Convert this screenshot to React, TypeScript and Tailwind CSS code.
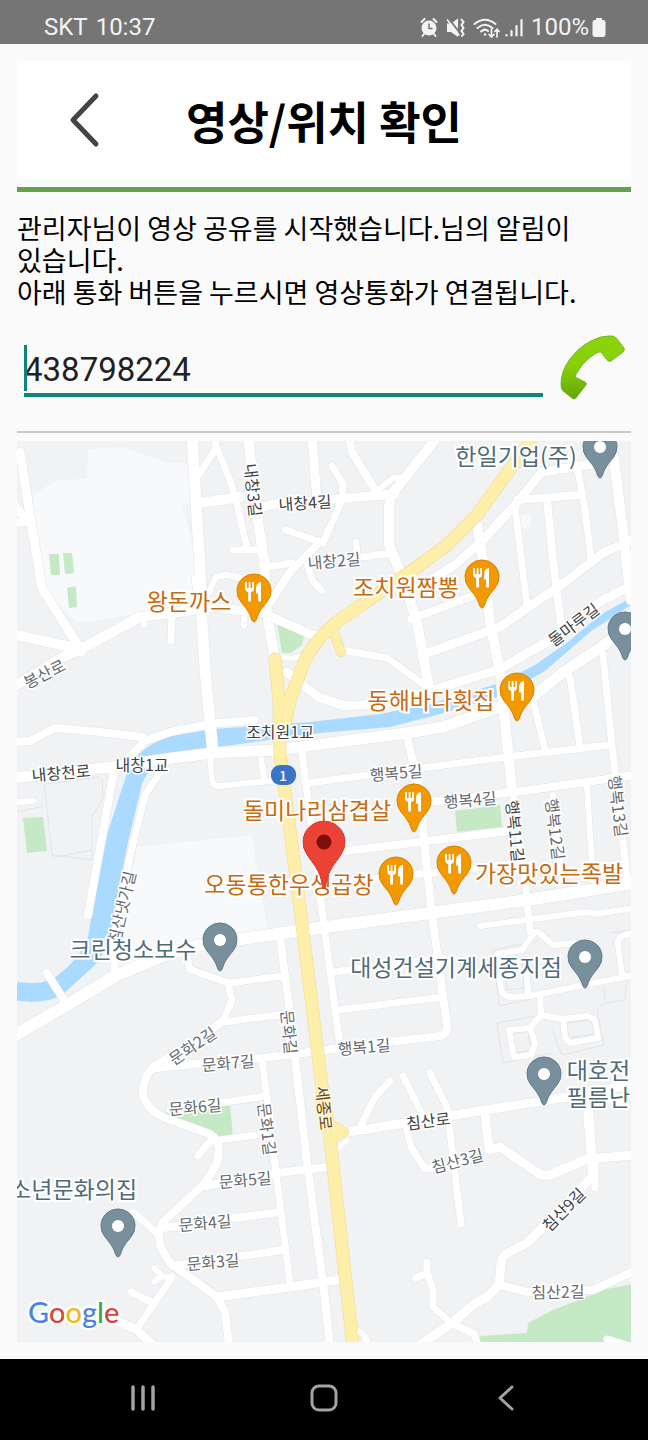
type Point = [number, number];
type Road = [width: number, d: string];
type Label = [text: string, x: number, y: number, angle: number];

const roads: Road[] = [
  [9, "M20 452 L32 528 L42 588 L82 652"],
  [8, "M14 504 L26 520 M14 523 L28 522"],
  [11, "M192 436 L200 568 L202 622 L205 670 L213 753"],
  [6, "M210 755 L212 780 Q213 786 219 786 L278 780"],
  [7, "M215 436 L216 446 L230 480 L236 500 L247 548 M216 448 L199 475"],
  [10, "M200 503 L240 497"],
  [10, "M248 436 L257 515 L264 560 L268 620 L275 660"],
  [7, "M233 550 L258 550"],
  [9, "M261 507 L280 503 L337 499 L395 494"],
  [9, "M312 436 L317 500"],
  [10, "M438 436 L392 494 Q389 500 389 510 L389 545 L403 578 L417 622 L429 688"],
  [8, "M349 436 L352 452 L375 490"],
  [7, "M332 466 L343 484 L342 500 L323 543 L286 530"],
  [8, "M318 544 L290 572 L268 606"],
  [7, "M267 567 L292 563 M307 562 L312 580 L322 591"],
  [6, "M378 490 L393 478 L402 477"],
  [7, "M363 557 L392 553 M356 542 L357 557"],
  [10, "M12 634 L80 649"],
  [10, "M10 689 L63 657 L83 648 L140 617 L193 610"],
  [9, "M200 606 L263 613 L310 634 L325 638"],
  [7, "M172 616 L171 641 M144 618 L144 624 M195 579 L198 600"],
  [6, "M208 594 L216 577 L226 575 L245 579 M245 612 L244 625"],
  [9, "M600 463 L542 472 L515 505 L483 540 L455 565 L408 594"],
  [10, "M477 525 L483 560 L490 622 L500 672 L512 790"],
  [7, "M515 507 L527 606 M577 465 L585 510 L591 558"],
  [8, "M547 500 L553 560 L561 624 M517 500 L578 495"],
  [10, "M611 436 L623 530 L631 600"],
  [9, "M634 539 L603 553 L557 588 L527 608 L500 627 L422 655"],
  [9, "M634 584 L600 602 L550 640 L500 669 L430 691 L380 704 L345 706 L318 697 L287 672"],
  [8, "M411 619 L478 594"],
  [7, "M341 650 L387 658 L427 687"],
  [8, "M12 742 L30 741 L55 728 L100 732 L142 737"],
  [8, "M254 720 L210 724 L170 732 L145 741 L128 758"],
  [11, "M12 778 L113 767 L173 758 L213 753 L277 750 L330 743 L407 733 L443 727 L497 708 L536 694 L565 671 L600 648 L634 622"],
  [8, "M114 770 L88 915"],
  [7, "M163 768 L145 795 L130 857 L120 905 L113 940 L115 975"],
  [8, "M47 973 L67 1005"],
  [12, "M10 1038 L67 1005 L117 975 L165 955 L200 945 L297 931 L430 913 L527 900 L634 883"],
  [6, "M480 926 L587 912 L597 914 L634 908"],
  [6, "M12 803 L33 801 M261 759 L264 778"],
  [7, "M302 753 L322 910 L340 1046"],
  [7, "M308 783 L437 766 L507 757 L610 745"],
  [8, "M400 806 L430 802 L530 790 L634 775"],
  [8, "M345 851 L420 842 L515 830"],
  [8, "M407 737 L420 790 L425 850 L432 915 L447 1026 Q448 1034 440 1036 L380 1043 L325 1050 L263 1058 L203 1063 L157 1068"],
  [7, "M533 700 L545 750 M570 677 L580 747 M603 655 L612 745 L627 878"],
  [7, "M512 790 L518 830 L526 890 L530 932"],
  [6, "M587 787 L593 880 M553 795 L562 880"],
  [7, "M340 882 L440 872 L520 863"],
  [7, "M333 972 L443 958 M338 1010 L443 997"],
  [6, "M535 932 L522 950 L497 954 L501 988 Q502 997 512 997 L530 996 L560 990 L634 975"],
  [6, "M538 932 L553 945 L590 942 M526 960 L528 992 M634 934 Q616 934 618 945 L622 975"],
  [6, "M540 995 L541 1015 L530 1028 L509 1030 L514 1057 L531 1055 L535 1043 L530 1028"],
  [6, "M541 1015 L563 1019 L588 1016 L595 1020 L598 1038 L570 1043 L565 1037 L563 1019"],
  [9, "M342 1133 L567 1097 L634 1084"],
  [7, "M390 1081 L375 1097 L361 1125 M403 1076 L423 1116"],
  [7, "M430 1073 L447 1107 L461 1224"],
  [7, "M405 1122 L411 1147 L425 1169 L437 1168"],
  [9, "M485 1115 L489 1150 L500 1147 L541 1175 L550 1175 L587 1159 L634 1155"],
  [10, "M587 1098 L593 1173 M608 1098 L625 1106"],
  [7, "M595 1160 L595 1188"],
  [9, "M591 1178 L560 1210 L527 1243 L506 1254 Q501 1258 501 1264 L499 1285 L487 1297 L473 1305 L452 1323 L420 1345"],
  [8, "M500 1285 L527 1292 L593 1290 L634 1271"],
  [7, "M478 1345 L474 1334 L450 1322 L433 1307 L433 1290 L427 1273 L427 1262 M416 1278 L427 1273"],
  [6, "M356 1330 L364 1334 L368 1345"],
  [7, "M187 953 L189 969 L228 983 L232 1000 L223 1021"],
  [8, "M223 1021 L190 1045 L153 1067 Q143 1078 143 1093 Q146 1110 165 1118 L210 1134 Q219 1140 219 1150 L217 1164 L204 1184 L162 1223 Q158 1230 160 1246 L170 1263 L217 1297 L225 1312 L229 1345"],
  [7, "M230 983 L283 976 M223 1022 L286 1014"],
  [8, "M280 937 L290 1013 L297 1075 L307 1163 L323 1283 L330 1345"],
  [7, "M262 1060 L267 1097 L273 1150 L290 1283"],
  [7, "M170 1110 L267 1096 M220 1140 L270 1133 M210 1141 L198 1156"],
  [8, "M205 1186 L277 1173 L329 1167 M163 1228 L280 1212 M173 1266 L283 1250"],
  [9, "M217 1297 L290 1287 L343 1279"],
  [7, "M133 1212 L158 1234 M172 1277 L137 1329 M131 1292 L153 1303"],
  [6, "M154 1268 L162 1276 L154 1282 M162 1276 L172 1278"],
  [9, "M108 1317 L137 1330 L155 1347"],
];

const outlines = [
  "M44 782 L52 855 L94 860 M102 779 L103 798 L92 817 L92 860 M47 784 L100 777 M17 812 L44 806 M52 858 L92 850",
  "M497 1023 L503 1063 L551 1053 M497 1023 L535 1016 M493 950 L538 941 M493 950 L499 1006 L536 998 M552 1030 L562 1055 L604 1045 L597 1010 L605 1003 L625 1000 L626 985 M610 933 L631 930 M604 988 L605 1001",
  "M512 1034 L528 1031 L531 1050 L516 1053 Z M566 1023 L591 1020 L594 1034 L569 1038 Z M505 960 L522 957 L524 988 L507 990 Z",
];

const greens = [
  "M49 554 L59 554 L60 575 L51 575 Z",
  "M63 553 L72 553 L74 573 L65 574 Z",
  "M67 588 L76 586 L77 607 L69 608 Z",
  "M277 623 L304 635 L302 645 L291 653 L282 653 Z",
  "M23 818 L43 817 L47 851 L27 853 Z",
  "M455 811 L500 805 L502 827 L457 832 Z",
  "M163 1113 L230 1105 L233 1137 L217 1137 L193 1123 Z",
  "M480 1336 L527 1333 L528 1323 L553 1310 L607 1289 L634 1284 V1345 H480 Z",
];

const highways: Road[] = [
  [12, "M534 436 L477 515 L447 545 L413 570 L380 592 L337 622 Q310 645 303 665 L290 700 L284 727"],
  [12, "M275 659 L279 700 L280 753 L299 900 L322 1087 L329 1130 L353 1346"],
  [9, "M333 630 L341 652 M330 1124 L344 1132 L332 1138"],
];

const strongLabels: Label[] = [
  ["내창3길", 254, 490, 84],
  ["내창4길", 305, 502, -4],
  ["돌마루길", 573, 624, -37],
  ["조치원1교", 280, 731, 0],
  ["내창1교", 142, 764, 0],
  ["내창천로", 61, 772, -5],
  ["행복11길", 516, 831, 84],
  ["침산로", 428, 1120, -7],
  ["침산9길", 563, 1209, -45],
];

const softLabels: Label[] = [
  ["내창2길", 334, 560, -5],
  ["봉산로", 44, 673, -27],
  ["행복5길", 396, 772, -5],
  ["행복4길", 470, 799, -5],
  ["행복12길", 556, 829, 83],
  ["행복13길", 619, 806, 83],
  ["침산냇가길", 121, 907, -77],
  ["문화길", 290, 1032, 84],
  ["문화2길", 192, 1045, -34],
  ["문화7길", 228, 1062, -5],
  ["문화6길", 195, 1106, -5],
  ["행복1길", 364, 1046, -5],
  ["문화1길", 268, 1129, 83],
  ["문화5길", 245, 1179, -5],
  ["문화4길", 205, 1222, -5],
  ["문화3길", 213, 1261, -5],
  ["침산3길", 457, 1160, -15],
  ["침산2길", 558, 1291, -1],
];

const foodLabels: Label[] = [
  ["왕돈까스", 189, 600, 0],
  ["조치원짬뽕", 406, 586, 0],
  ["동해바다횟집", 431, 699, 0],
  ["돌미나리삼겹살", 317, 809, 0],
  ["오동통한우생곱창", 289, 883, 0],
  ["가장맛있는족발", 549, 872, 0],
];

const placeLabels: Label[] = [
  ["한일기업(주)", 516, 455, 0],
  ["크린청소보수", 133, 948, 0],
  ["대성건설기계세종지점", 456, 966, 0],
  ["대호전자", 609, 1069, 0],
  ["필름난방", 609, 1096, 0],
  ["청소년문화의집", 63, 1188, 0],
];

const foodPins: Point[] = [[254, 591], [482, 577], [517, 690], [414, 801], [454, 863], [396, 874]];
const placePins: Point[] = [[600, 447], [625, 629], [220, 940], [585, 957], [544, 1074], [118, 1226]];

const pinShape = "M0 31 Q-1.500 31 -2.500 28 C-5 20 -9 16 -13 10.900 A17 17 0 1 1 13 10.900 C9 16 5 20 2.500 28 Q1.500 31 0 31 Z";

function MapLabels({ items, className }: { items: Label[]; className: string }) {
  return (
    <g className={className}>
      {items.map(([text, x, y, angle]) => (
        <text key={text} transform={`translate(${x} ${y}) rotate(${angle})`} textAnchor="middle" dominantBaseline="central">
          {text}
        </text>
      ))}
    </g>
  );
}

function FoodPin({ at: [x, y] }: { at: Point }) {
  return (
    <g transform={`translate(${x} ${y})`}>
      <path d={pinShape} fill="#f29900" stroke="#d98200" strokeWidth="1" />
      <path
        d="M-8.800 -9 V-2.500 Q-8.800 0.500 -5.800 1 V10.500 H-3 V1 Q0 0.500 0 -2.500 V-9 H-1.800 V-3 H-3.500 V-9 H-5.300 V-3 H-7 V-9 Z M7 -9 Q2 -8.500 2 -2 V2.500 H4.200 V10.500 H7 Z"
        fill="#fff"
      />
    </g>
  );
}

function StreetMap() {
  return (
    <svg
      viewBox="17 441 614 901"
      preserveAspectRatio="xMidYMid slice"
      role="img"
      aria-label="지도"
      className="block w-full flex-1 bg-[#f0f2f4] font-['Noto_Sans_CJK_KR',sans-serif]"
    >
      <g fill="#f8f9fb">
        <path d="M88 449 L123 447 L167 463 L190 463 L196 503 L182 505 L195 552 L198 605 L77 623 L42 588 L33 495 L57 480 L87 479 Z" />
        <path d="M137 847 L252 835 L257 870 L268 930 L200 945 L113 975 L125 905 Z" />
        <path d="M520 516 L530 514 L531 526 L521 528 Z" />
      </g>
      <g fill="#c5e8c5">
        {greens.map((d) => <path key={d} d={d} />)}
      </g>
      <g fill="none" stroke="#e1e3e5" strokeWidth="1">
        {outlines.map((d) => <path key={d} d={d} />)}
      </g>
      <path
        d="M634 596 L600 615 L568 642 L535 665 L500 683 L430 704 L380 714 L310 722 L283 724 L215 729 L175 735 Q150 742 137 756 L126 776 L108 832 L94 900 L88 938 Q80 958 57 976 Q45 986 17 982 L10 1000 Q45 1005 62 995 L95 965 Q108 950 113 917 L128 842 L142 784 Q152 760 175 752 L233 745 L320 733 L390 727 L440 714 L500 696 L545 671 L590 632 L634 603 Z"
        fill="#aadaff"
      />
      <g fill="none" strokeLinecap="round" strokeLinejoin="round">
        {roads.map(([width, d]) => <path key={d} d={d} stroke="#e2e4e8" strokeWidth={width + 1} />)}
        {roads.map(([width, d]) => <path key={d} d={d} stroke="#fff" strokeWidth={width} />)}
        <path d="M282 657 Q294 660 304 655 M347 1140 L335 1152" stroke="#fff" strokeWidth="4" />
        <path d="M607 1339 L630 1346" stroke="#fff" strokeWidth="7" />
        {highways.map(([width, d]) => <path key={d} d={d} stroke="#f0d98c" strokeWidth={width + 1} />)}
        {highways.map(([width, d]) => <path key={d} d={d} stroke="#fdefa9" strokeWidth={width} />)}
      </g>
      <rect x="271" y="765" width="25" height="20" rx="9" fill="#3a74c8" />
      <text x="283" y="775" textAnchor="middle" dominantBaseline="central" className="fill-white text-[14px] font-medium">1</text>

      <MapLabels items={softLabels} className="fill-[#666a70] stroke-white stroke-3 text-[16px] [paint-order:stroke]" />
      <MapLabels items={strongLabels} className="fill-[#3f4246] stroke-white stroke-3 text-[16px] [paint-order:stroke]" />
      <MapLabels items={[["세종로", 325, 1108, 84]]} className="fill-[#6b3f12] stroke-[#fff7d6] stroke-3 text-[16px] [paint-order:stroke]" />
      <MapLabels items={foodLabels} className="fill-[#c76a10] stroke-white stroke-4 text-[23px] [paint-order:stroke]" />
      <MapLabels items={placeLabels} className="fill-[#506b78] stroke-white stroke-4 text-[23px] [paint-order:stroke]" />

      {foodPins.map((at) => <FoodPin key={at.join()} at={at} />)}
      {placePins.map(([x, y]) => (
        <g key={x} transform={`translate(${x} ${y})`}>
          <path d={pinShape} fill="#78909c" stroke="#607a87" strokeWidth="1" />
          <circle r="6" fill="#fff" />
        </g>
      ))}
      <g transform="translate(324 842)">
        <path d="M0 47 Q-1.500 47 -2 42 C-4 28 -11 22 -17 12.500 A21 21 0 1 1 17 12.500 C11 22 4 28 2 42 Q1.500 47 0 47 Z" fill="#ea4335" stroke="#d33c2f" strokeWidth="1" />
        <circle r="7.500" fill="#7d0f0e" />
      </g>
      <text x="28" y="1323" className="stroke-white stroke-5 font-['Lato',sans-serif] text-[29px] font-medium [paint-order:stroke]">
        <tspan fill="#4a83e8">G</tspan>
        <tspan fill="#d6463b">o</tspan>
        <tspan fill="#f2b91d">o</tspan>
        <tspan fill="#4a83e8">g</tspan>
        <tspan fill="#3fa257">l</tspan>
        <tspan fill="#d6463b">e</tspan>
      </text>
    </svg>
  );
}

function StatusBar() {
  return (
    <div className="flex h-11 items-end justify-between bg-[#757575] pr-[41px] pb-[3px] pl-11 font-['Roboto',sans-serif] text-[24px] leading-7 text-[#f3f3f3]">
      <div className="flex gap-2">
        <span>SKT</span>
        <span>10:37</span>
      </div>
      <div className="flex items-center">
        <svg viewBox="0 0 112 28" className="h-7 w-28" fill="none" stroke="currentColor" strokeLinecap="round" aria-hidden="true">
          <circle cx="10" cy="15" r="7.500" fill="currentColor" stroke="none" />
          <path d="M2.500 9 L5.500 6 M17.500 9 L14.500 6 M5 21 L3.500 23 M15 21 L16.500 23" strokeWidth="2" />
          <path d="M10 11 V15.500 H13" stroke="#757575" strokeWidth="1.500" />
          <path d="M28 10.500 H32 L39 5.500 V24 L32 19 H28 Z" fill="currentColor" stroke="none" />
          <path d="M29.500 5.500 L41 20" stroke="#757575" strokeWidth="2" />
          <path d="M28.500 7 L40 22" strokeWidth="1.600" />
          <path d="M42.500 6.500 L44.500 9 L42.500 12 L44.500 15 L42.500 18 L44.500 21 L43 23" strokeWidth="2" />
          <path d="M55.500 11 Q66 2.500 76.500 11 M58.500 15 Q66 8.500 73.500 15 M62 18.500 Q66 15 69 18" strokeWidth="2" />
          <circle cx="66" cy="21.500" r="1.300" fill="currentColor" stroke="none" />
          <path d="M72.500 16 V24 M70 21.500 L72.500 24 L75 21.500 M78 24 V16.500 M75.800 18.500 L78 16.200 L80.200 18.500" strokeWidth="1.700" />
          <path d="M87.500 22 V22.500 M92.500 18 V22.500 M97.500 13 V22.500 M102.500 7 V22.500" strokeWidth="2.200" />
        </svg>
        <span>100%</span>
        <svg viewBox="0 0 16 28" className="ml-0.5 h-7 w-4" fill="currentColor" aria-hidden="true">
          <path d="M5 5 H11 V7 H12 Q14.500 7 14.500 9.500 V21 Q14.500 24 12 24 H4 Q1.500 24 1.500 21 V9.500 Q1.500 7 4 7 H5 Z" />
        </svg>
      </div>
    </div>
  );
}

export default function App() {
  return (
    <div className="flex min-h-screen flex-col bg-[#fafafa] font-['Roboto','Noto_Sans_CJK_KR',sans-serif] text-black">
      <StatusBar />
      <main className="flex flex-1 flex-col p-[17px]">
        <header className="grid h-[118px] grid-cols-[136px_1fr_136px] items-center bg-white">
          <button type="button" aria-label="뒤로" className="flex h-full items-center justify-center">
            <svg viewBox="0 0 36 60" className="h-[60px] w-9" fill="none" stroke="#444" strokeWidth="5" strokeLinecap="round" strokeLinejoin="round">
              <path d="M29 6 L6 30 L29 54" />
            </svg>
          </button>
          <h1 className="text-center font-['Noto_Sans_CJK_KR',sans-serif] text-[45px] leading-none font-bold whitespace-nowrap">영상/위치 확인</h1>
        </header>
        <div className="mt-2 h-[5px] bg-[#64a34d]" />
        <p className="mt-5 font-['Noto_Sans_CJK_KR',sans-serif] text-[27px] leading-8">
          관리자님이 영상 공유를 시작했습니다.님의 알림이
          <br />
          있습니다.
          <br />
          아래 통화 버튼을 누르시면 영상통화가 연결됩니다.
        </p>
        <div className="mt-6 flex items-center gap-3 pl-[7px]">
          <div className="relative flex-1">
            <input
              type="text"
              inputMode="numeric"
              aria-label="통화 번호"
              defaultValue="438798224"
              className="h-[60px] w-full border-b-4 border-[#0f857a] bg-transparent pt-2 font-['Roboto',sans-serif] text-[33px] text-[#212121] outline-none"
            />
            <span className="absolute top-2 left-0 h-[46px] w-[3px] bg-[#0f857a]" />
          </div>
          <button type="button" aria-label="통화" className="h-[70px] w-[76px] shrink-0">
            <svg viewBox="0 0 76 70" className="h-[70px] w-[76px]">
              <defs>
                <linearGradient id="handset" x1="0" y1="0" x2="0" y2="1">
                  <stop offset="0" stopColor="#8bd60a" />
                  <stop offset="0.500" stopColor="#86cf08" />
                  <stop offset="1" stopColor="#66a507" />
                </linearGradient>
              </defs>
              <path
                d="M54 4 Q59 3 62 7 L69 16 Q70 18 68 20 L56 29 Q54 30 52 28 L46 20 Q42 19 32 28 Q22 38 20 45 L30 50 Q32 51 31 53 L21 66 Q19 68 17 66 L8 59 Q6 57 6 52 Q6 39 15 27 Q24 15 36 9 Q45 4 54 4 Z"
                fill="url(#handset)"
                stroke="#7ab51f"
                strokeWidth="1"
              />
            </svg>
          </button>
        </div>
        <hr className="mt-[29px] mb-2 border-t-2 border-[#cbcbcb]" />
        <StreetMap />
      </main>
      <nav className="flex h-[81px] items-center bg-black px-[52px] pb-1 text-[#a3a3a3]">
        <button type="button" aria-label="최근 앱" className="flex flex-1 justify-center">
          <svg viewBox="0 0 28 28" className="size-7" stroke="currentColor" strokeWidth="3.500" strokeLinecap="round">
            <path d="M4 3 V25 M14 3 V25 M24 3 V25" />
          </svg>
        </button>
        <button type="button" aria-label="홈" className="flex flex-1 justify-center">
          <svg viewBox="0 0 28 28" className="size-7" fill="none" stroke="currentColor" strokeWidth="3">
            <rect x="2" y="2" width="24" height="24" rx="7" />
          </svg>
        </button>
        <button type="button" aria-label="뒤로 가기" className="flex flex-1 justify-center">
          <svg viewBox="0 0 28 28" className="size-7" fill="none" stroke="currentColor" strokeWidth="3" strokeLinecap="round" strokeLinejoin="round">
            <path d="M21 3 L9 14 L21 25" />
          </svg>
        </button>
      </nav>
    </div>
  );
}
